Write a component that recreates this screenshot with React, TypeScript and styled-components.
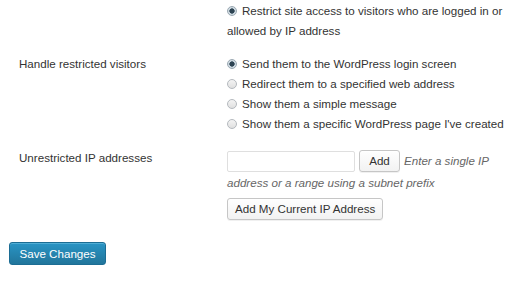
import React from "react";
import styled, { createGlobalStyle } from "styled-components";

const FONT = `"Liberation Sans", Arial, sans-serif`;

const Global = createGlobalStyle`
  html, body { margin: 0; padding: 0; background: #fff; }
  body { font-family: ${FONT}; font-size: 11.6px; color: #333; }
`;

const Page = styled.div`
  width: 520px;
  height: 286px;
  padding: 1px 0 0 9px;
  box-sizing: border-box;
  overflow: hidden;
`;

const Row = styled.div<{ $mt?: number }>`
  display: grid;
  grid-template-columns: 218px 1fr;
  margin-top: ${(p) => p.$mt ?? 0}px;
  align-items: start;
`;

const Label = styled.div<{ $pt?: number }>`
  padding-left: 10px;
  margin-top: ${(p) => p.$pt ?? 0}px;
  line-height: 20px;
`;

const Field = styled.div`
  width: 286px;
  line-height: 20px;
`;

const Option = styled.label`
  display: block;
  line-height: 20px;
`;

const Radio = styled.input.attrs({ type: "radio" })`
  appearance: none;
  -webkit-appearance: none;
  width: 10px;
  height: 10px;
  margin: 0 5px 0 0;
  border-radius: 50%;
  border: 1px solid #b4b9be;
  background: linear-gradient(#f4f4f4, #e0e0e0);
  box-sizing: border-box;
  vertical-align: -1px;
  &:checked {
    background: radial-gradient(circle, #2e4453 0 2.4px, #c5d2db 2.8px, #eef2f4 100%);
    border-color: #9aa8b2;
  }
`;

const InputLine = styled.div`
  display: flex;
  align-items: center;
  gap: 4px;
`;

const TextInput = styled.input`
  width: 128px;
  height: 21px;
  box-sizing: border-box;
  border: 1px solid #dfdfdf;
  border-radius: 2px;
  margin: 0;
  background: #fff;
`;

const Button = styled.button<{ $w?: number }>`
  height: 22px;
  ${(p) => (p.$w ? `width: ${p.$w}px;` : "")}
  padding: 0 7px;
  box-sizing: border-box;
  border: 1px solid #c6c6c6;
  border-radius: 3px;
  background: linear-gradient(#fefefe, #f2f2f2);
  color: #333;
  font-family: ${FONT};
  font-size: 11.6px;
  line-height: 20px;
  margin: 0;
  box-shadow: inset 0 1px 0 #fff, 0 1px 0 rgba(0, 0, 0, 0.06);
`;

const Help = styled.span`
  font-style: italic;
  color: #666;
  white-space: nowrap;
`;

const HelpText = styled.div`
  margin-top: 1px;
`;

const Primary = styled.button`
  margin-top: 22px;
  height: 23px;
  width: 97px;
  box-sizing: border-box;
  border: 1px solid #1c6d94;
  border-radius: 3px;
  background: linear-gradient(#2a95c5, #21759b);
  color: #fff;
  font-family: ${FONT};
  font-size: 11.6px;
  padding: 0;
  box-shadow: inset 0 1px 0 rgba(120, 200, 230, 0.5);
`;

const Spacer = styled.div`
  height: 5px;
`;

export default function App() {
  return (
    <Page>
      <Global />
      <Row>
        <div />
        <Field>
          <Option>
            <Radio name="a" defaultChecked />Restrict site access to visitors who are logged in or allowed by IP address
          </Option>
        </Field>
      </Row>
      <Row $mt={13}>
        <Label>Handle restricted visitors</Label>
        <Field>
          <Option><Radio name="b" defaultChecked />Send them to the WordPress login screen</Option>
          <Option><Radio name="b" />Redirect them to a specified web address</Option>
          <Option><Radio name="b" />Show them a simple message</Option>
          <Option><Radio name="b" />Show them a specific WordPress page I've created</Option>
        </Field>
      </Row>
      <Row $mt={16}>
        <Label $pt={-2}>Unrestricted IP addresses</Label>
        <Field>
          <InputLine>
            <TextInput type="text" />
            <Button $w={41}>Add</Button>
            <Help>Enter a single IP</Help>
          </InputLine>
          <HelpText><Help>address or a range using a subnet prefix</Help></HelpText>
          <Spacer />
          <Button>Add My Current IP Address</Button>
        </Field>
      </Row>
      <Primary>Save Changes</Primary>
    </Page>
  );
}
